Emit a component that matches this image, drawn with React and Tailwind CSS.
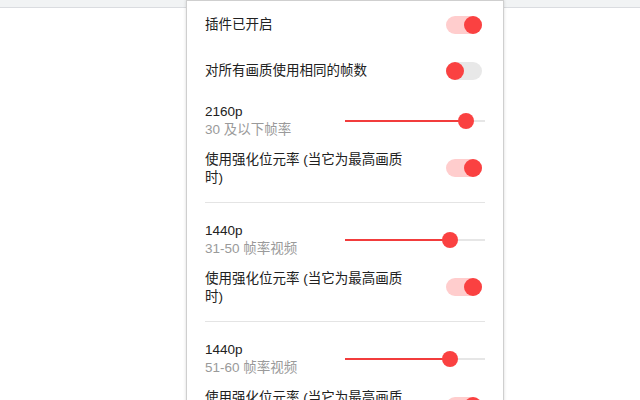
import React from "react";

const FONT = { fontFamily: '"Liberation Sans", Arial, "Noto Sans CJK SC", sans-serif' };

function Toggle({ on }) {
  return (
    <div className={`relative w-[36px] h-[18px] rounded-full ${on ? "bg-[#ffcdcd]" : "bg-[#e8e8e8]"}`}>
      <div
        className={`absolute top-0 w-[18px] h-[18px] rounded-full bg-[#fa4141] ${on ? "right-0" : "left-0"}`}
      />
    </div>
  );
}

function Slider({ pos }) {
  return (
    <div className="relative w-[140px] h-[18px] mr-[-3px] mt-[2px]">
      <div className="absolute left-0 right-0 top-[8px] h-[2px] bg-[#e6e6e6]" />
      <div className="absolute left-0 top-[8px] h-[2px] bg-[#f23c3c]" style={{ width: pos }} />
      <div
        className="absolute top-[1px] w-[16px] h-[16px] rounded-full bg-[#fa4141]"
        style={{ left: pos - 8 }}
      />
    </div>
  );
}

function Section({ title, sub, pos, first }) {
  return (
    <div className={first ? "mt-[9px]" : "mt-[18px]"}>
      <div className="flex items-center justify-between h-[36px]">
        <div className="leading-[18px] pt-[1px]">
          <div className="text-[#212121]">{title}</div>
          <div className="text-[#9a9a9a]">{sub}</div>
        </div>
        <Slider pos={pos} />
      </div>
      <div className="flex items-center justify-between h-[36px] mt-[12px]">
        <div className="w-[208px] leading-[18px] pt-[1px] text-[#212121]">使用强化位元率 (当它为最高画质时)</div>
        <Toggle on />
      </div>
      <div className="mt-[16px] h-px bg-[#e4e4e4] mr-[-3px]" />
    </div>
  );
}

export default function App() {
  return (
    <div className="relative w-[640px] h-[400px] overflow-hidden bg-white" style={FONT}>
      <div className="h-[8px] bg-[#f1f3f4] border-b border-[#dadce0]" />
      <div className="absolute left-[186px] top-0 w-[318px] h-[420px] bg-white border border-[#cfcfcf] shadow-[0_0_3px_rgba(0,0,0,0.15)] pl-[18px] pr-[21px] text-[13.5px]">
        <div className="flex items-center justify-between h-[48px]">
          <span className="text-[#212121] pt-[1px]">插件已开启</span>
          <Toggle on />
        </div>
        <div className="flex items-center justify-between h-[44px]">
          <span className="text-[#212121] pt-[1px]">对所有画质使用相同的帧数</span>
          <Toggle on={false} />
        </div>
        <Section first title="2160p" sub="30 及以下帧率" pos={121} />
        <Section title="1440p" sub="31-50 帧率视频" pos={105} />
        <Section title="1440p" sub="51-60 帧率视频" pos={105} />
      </div>
    </div>
  );
}
